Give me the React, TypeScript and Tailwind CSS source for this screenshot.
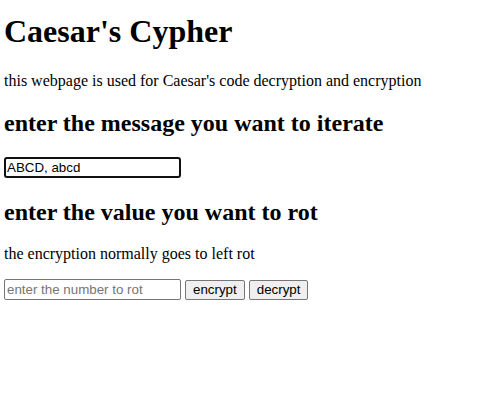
import React from "react";

export default function App() {
  return (
    <div
      className="min-h-[410px] w-[484px] bg-white pl-[4px] text-black"
      style={{ fontFamily: '"Liberation Serif", "Times New Roman", serif' }}
    >
      <div className="flow-root">
        <h1 className="mt-[13px] text-[32px] font-bold leading-[37px]">Caesar's Cypher</h1>
        <p className="mt-[22px] text-[16px] leading-[18px]">
          this webpage is used for Caesar's code decryption and encryption
        </p>
        <h2 className="mt-[19px] text-[24px] font-bold leading-[28px]">
          enter the message you want to iterate
        </h2>
        <div className="mt-[20px] flex">
          <input
            type="text"
            defaultValue="ABCD, abcd"
            className="box-border h-[21px] w-[177px] rounded-[3px] border-2 border-[#101010] px-[1px] text-[13.33px] leading-[15px] text-black outline-none"
            style={{ fontFamily: '"Liberation Sans", Arial, sans-serif' }}
          />
        </div>
        <h2 className="mt-[20px] text-[24px] font-bold leading-[28px]">
          enter the value you want to rot
        </h2>
        <p className="mt-[19px] text-[16px] leading-[18px]">the encryption normally goes to left rot</p>
        <div
          className="mt-[16px] flex items-center gap-[4px]"
          style={{ fontFamily: '"Liberation Sans", Arial, sans-serif' }}
        >
          <input
            type="text"
            placeholder="enter the number to rot"
            className="box-border h-[21px] w-[177px] rounded-[2px] border border-[#767676] px-[2px] text-[13.33px] leading-[15px] text-black outline-none placeholder:text-[#757575]"
          />
          <button className="box-border h-[20px] rounded-[2px] border border-[#767676] bg-[#efefef] px-[7px] text-[13.33px] leading-[15px] text-black">
            encrypt
          </button>
          <button className="box-border h-[20px] rounded-[2px] border border-[#767676] bg-[#efefef] px-[7px] text-[13.33px] leading-[15px] text-black">
            decrypt
          </button>
        </div>
      </div>
    </div>
  );
}
